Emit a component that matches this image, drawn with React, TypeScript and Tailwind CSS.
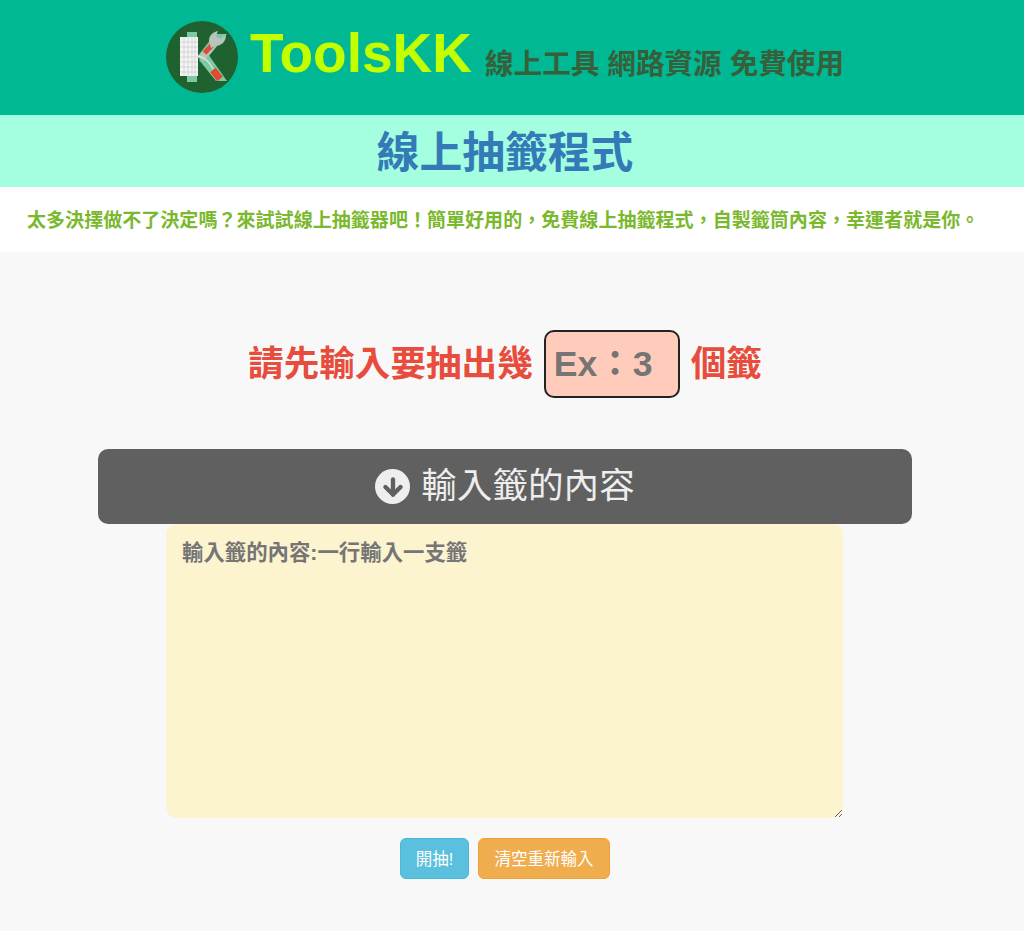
import { ArrowDown } from "lucide-react";

const cjk = "font-['Liberation_Sans','Noto_Sans_CJK_TC',sans-serif]";

function Logo() {
  return (
    <svg width="72" height="72" viewBox="0 0 72 72" className="shrink-0">
      <circle cx="36" cy="36" r="36" fill="#20622f" />
      {/* K */}
      <path d="M21 11h10v50H21z" fill="#7cc9a4" />
      <path d="M31 36 49 13h12L38 41z" fill="#7cc9a4" />
      <path d="M33 39l9-6 19 27H50z" fill="#7cc9a4" />
      {/* keyboard */}
      <rect x="14" y="16" width="18" height="39" fill="#f4f4f4" />
      <path d="M14 21h18M14 26h18M14 31h18M14 36h18M14 41h18M14 46h18M14 51h18M18 16v39M22 16v39M26 16v39M29 16v39" stroke="#c4c4c4" strokeWidth="0.6" />
      {/* wrench */}
      <path d="M35 38 51 19" stroke="#b9c4bc" strokeWidth="7" />
      <path d="M38.5 32 49.5 20.5" stroke="#df4a30" strokeWidth="5" />
      <path d="M43 20c0-6 4-9 9-10l-2 5 4 3 6-4c0 7-5 11-11 11l-4 2z" fill="#b9c4bc" />
      {/* wire and screwdriver */}
      <path d="M32 35c5 1 9 4 12 8l3 5" fill="none" stroke="#dbe6de" strokeWidth="1.3" />
      <path d="M47 49l7 9" stroke="#df4a30" strokeWidth="7" />
    </svg>
  );
}

export default function App() {
  return (
    <div className={`min-h-[931px] bg-[#f8f8f8] ${cjk}`}>
      <header className="h-[115px] bg-[#00b894]">
        <div className="flex w-[1010px] justify-center pt-[21px]">
          <div className="flex w-[678px] items-start">
            <Logo />
            <span className="ml-[12px] text-[55px] leading-[64px] font-bold text-[#c4ff00]">ToolsKK</span>
            <span className="ml-[13px] mt-[23px] text-[28.6px] leading-[40px] font-bold whitespace-nowrap text-[#37603a]">
              線上工具 網路資源 免費使用
            </span>
          </div>
        </div>
      </header>

      <div className="h-[72px] bg-[#a3ffe0]">
        <h1 className="w-[1010px] text-center text-[42.8px] leading-[76px] font-bold text-[#337ab7]">線上抽籤程式</h1>
      </div>

      <p className="h-[65px] bg-white pl-[27px] text-[19.06px] leading-[67px] font-bold whitespace-nowrap text-[#7ab82d]">
        太多決擇做不了決定嗎？來試試線上抽籤器吧！簡單好用的，免費線上抽籤程式，自製籤筒內容，幸運者就是你。
      </p>

      <main className="flex w-[1010px] flex-col items-center pt-[78px]">
        <div className="flex items-center text-[35.6px] leading-[46px] font-bold text-[#e74c3c]">
          <span>請先輸入要抽出幾</span>
          <input
            placeholder="Ex：3"
            className="mx-[11px] h-[68px] w-[136px] rounded-[10px] border-2 border-[#222222] bg-[#ffccbc] px-[8px] font-['Liberation_Sans','Noto_Sans_CJK_KR',sans-serif] text-[35.6px] font-bold outline-none placeholder:text-[#757575]"
          />
          <span>個籤</span>
        </div>

        <div className="mt-[51px] flex h-[75px] w-[814px] items-center justify-center gap-[11px] rounded-[10px] bg-[#606060] text-[35.6px] text-[#eeeeee]">
          <span className="flex h-[35px] w-[35px] items-center justify-center rounded-full bg-[#eeeeee]">
            <ArrowDown size={26} strokeWidth={4} color="#606060" />
          </span>
          <span>輸入籤的內容</span>
        </div>

        <textarea
          placeholder="輸入籤的內容:一行輸入一支籤"
          className="mr-[1px] h-[294px] w-[677px] rounded-[10px] bg-[#fcf3cf] p-[16px] text-[21.4px] leading-[26px] font-bold outline-none placeholder:text-[#757575]"
        />

        <div className="mt-[20px] flex gap-[9px] text-[16.5px] leading-[20px] text-white">
          <button type="button" className="h-[41px] w-[69px] rounded-[6px] border border-[#46b8da] bg-[#5bc0de]">
            開抽!
          </button>
          <button type="button" className="h-[41px] w-[132px] rounded-[6px] border border-[#eea236] bg-[#f0ad4e]">
            清空重新輸入
          </button>
        </div>
      </main>
    </div>
  );
}
